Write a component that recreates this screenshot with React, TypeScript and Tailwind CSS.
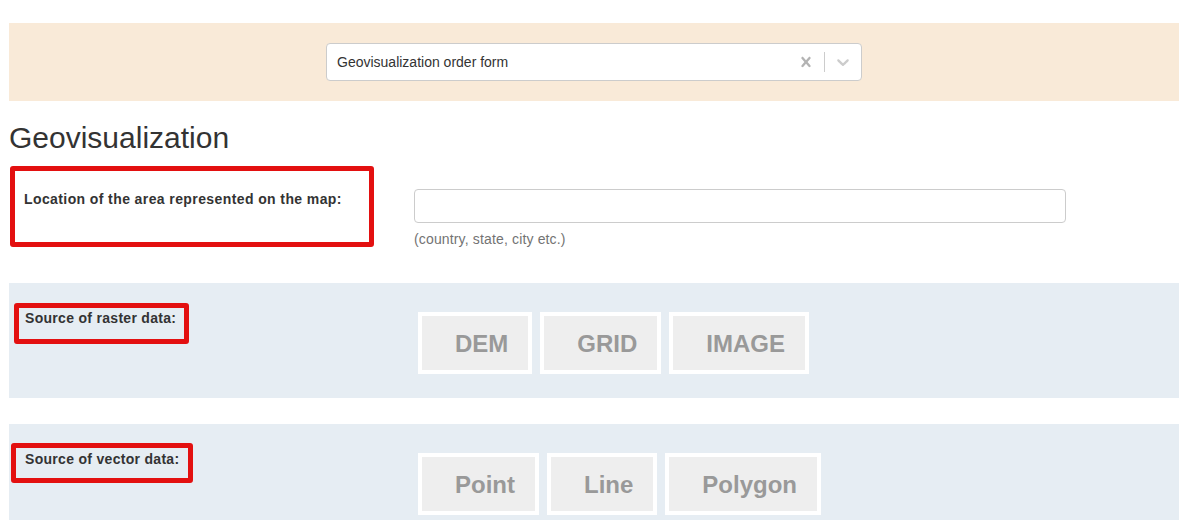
import React from "react";

function Btn({ label }: { label: string }) {
  return (
    <div className="h-[62px] border-4 border-white bg-[#eeeeee] pl-[33px] pr-[19.5px] pt-[2px] flex items-center text-[24px] font-bold leading-none text-[#999999]">
      {label}
    </div>
  );
}

export default function App() {
  return (
    <div className="min-h-[520px] bg-white pl-[9px] pr-[4px] pt-[23px] font-['Liberation_Sans',Arial,sans-serif] text-[#333333]">
      <div className="h-[78px] bg-[#f9ead8] flex items-center justify-center">
        <div className="w-[536px] h-[38px] border border-[#cccccc] rounded bg-white flex items-center">
          <span className="flex-1 pl-[10px] text-[14px] leading-[20px]">Geovisualization order form</span>
          <span className="w-[36px] h-[36px] flex items-center justify-center">
            <svg width="20" height="20" viewBox="0 0 20 20" fill="#b3b3b3">
              <path d="M14.348 14.849c-0.469 0.469-1.229 0.469-1.697 0l-2.651-3.030-2.651 3.029c-0.469 0.469-1.229 0.469-1.697 0-0.469-0.469-0.469-1.229 0-1.697l2.758-3.15-2.759-3.152c-0.469-0.469-0.469-1.228 0-1.697s1.228-0.469 1.697 0l2.652 3.031 2.651-3.031c0.469-0.469 1.228-0.469 1.697 0s0.469 1.229 0 1.697l-2.758 3.152 2.758 3.150c0.469 0.469 0.469 1.229 0 1.698z" />
            </svg>
          </span>
          <span className="w-px h-[20px] bg-[#cccccc]" />
          <span className="w-[36px] h-[36px] flex items-center justify-center">
            <svg width="20" height="20" viewBox="0 0 20 20" fill="#cccccc">
              <path d="M4.516 7.548c0.436-0.446 1.043-0.481 1.576 0l3.908 3.747 3.908-3.747c0.533-0.481 1.141-0.446 1.574 0 0.436 0.445 0.408 1.197 0 1.615-0.406 0.418-4.695 4.502-4.695 4.502-0.217 0.223-0.502 0.335-0.787 0.335s-0.57-0.112-0.789-0.335c0 0-4.287-4.084-4.695-4.502s-0.436-1.170 0-1.615z" />
            </svg>
          </span>
        </div>
      </div>

      <h2 className="mt-[20px] text-[30px] leading-[33px] font-normal">Geovisualization</h2>

      <div className="mt-[12px] flex h-[81px]">
        <div className="w-[405px] shrink-0">
          <div className="ml-[1px] w-[364px] h-[81px] border-[5px] border-[#e31010] rounded-[3px] pl-[9px] pt-[19px] text-[14px] font-bold leading-[18px] tracking-[0.4px]">
            Location of the area represented on the map:
          </div>
        </div>
        <div className="w-[652px] pt-[23px]">
          <div className="h-[34px] border border-[#cccccc] rounded bg-white" />
          <div className="mt-[6px] text-[14px] leading-[20px] tracking-[0.15px] text-[#737373]">(country, state, city etc.)</div>
        </div>
      </div>

      <div className="mt-[36px] h-[115px] bg-[#e6edf3] flex">
        <div className="w-[405px] shrink-0 pl-[5px] pt-[20px]">
          <div className="w-[175px] h-[41px] border-[5px] border-[#e31010] rounded-[3px] pl-[6px] pt-[1px] text-[14px] font-bold leading-[18px] tracking-[0.3px]">
            Source of raster data:
          </div>
        </div>
        <div className="pt-[29px] pl-[4px] flex items-start gap-[8.5px]">
          <Btn label="DEM" />
          <Btn label="GRID" />
          <Btn label="IMAGE" />
        </div>
      </div>

      <div className="mt-[26px] h-[115px] bg-[#e6edf3] flex">
        <div className="w-[405px] shrink-0 pl-[2px] pt-[19px]">
          <div className="w-[182px] h-[40px] border-[5px] border-[#e31010] rounded-[3px] pl-[9px] pt-[2px] text-[14px] font-bold leading-[18px] tracking-[0.3px]">
            Source of vector data:
          </div>
        </div>
        <div className="pt-[29px] pl-[4px] flex items-start gap-[8.5px]">
          <Btn label="Point" />
          <Btn label="Line" />
          <Btn label="Polygon" />
        </div>
      </div>
    </div>
  );
}
